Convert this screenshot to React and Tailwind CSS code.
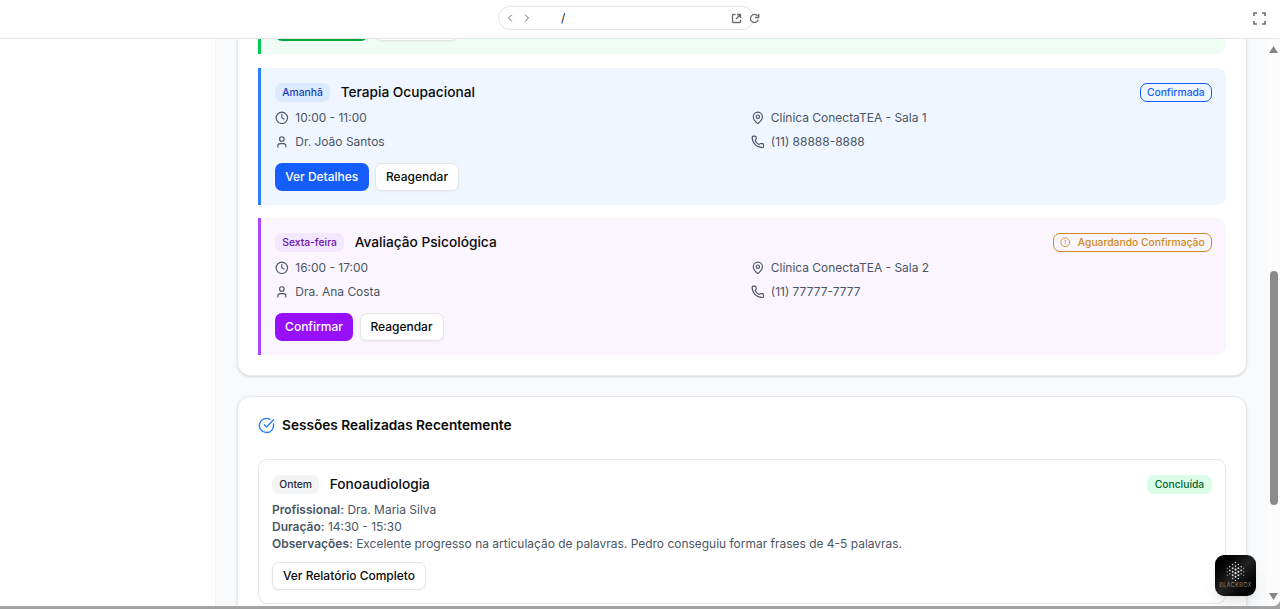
import React from "react";
import { ChevronLeft, ChevronRight, CircleAlert, CircleCheckBig, Clock, MapPin, Phone, User } from "lucide-react";

function Detail({ icon: Icon, children }) {
  return (
    <div className="flex h-[17px] items-center gap-[6.6px]">
      <Icon className="size-[13.7px] shrink-0" strokeWidth={2} />
      <span className="whitespace-nowrap">{children}</span>
    </div>
  );
}

function Badge({ className, children }) {
  return (
    <span className={"inline-flex h-[19px] items-center whitespace-nowrap rounded-[7px] border px-[6.3px] text-[10.3px] font-medium " + className}>
      {children}
    </span>
  );
}

function Button({ className, children }) {
  return (
    <button className={"flex h-[28px] items-center justify-center whitespace-nowrap rounded-[7px] text-[12px] font-medium " + className}>
      {children}
    </button>
  );
}

function Session({ tone, dayTone, day, title, status, time, person, place, phone, action, actionTone }) {
  return (
    <section className={"h-[136.5px] rounded-r-[9px] border-l-[3px] pr-[13.5px] pl-[14px] pt-[14px] " + tone}>
      <div className="flex h-[20.5px] items-center justify-between">
        <div className="flex items-center gap-[10.5px]">
          <Badge className={"border-transparent " + dayTone}>{day}</Badge>
          <h3 className="text-[13.7px] font-medium text-neutral-950">{title}</h3>
        </div>
        {status}
      </div>
      <div className="mt-[6.5px] grid grid-cols-2 gap-x-[14px] gap-y-[7px] text-[11.97px] text-gray-600">
        <Detail icon={Clock}>{time}</Detail>
        <Detail icon={MapPin}>{place}</Detail>
        <Detail icon={User}>{person}</Detail>
        <Detail icon={Phone}>{phone}</Detail>
      </div>
      <div className="mt-[13px] flex gap-[6.5px]">
        <Button className={"text-white " + actionTone}>{action}</Button>
        <Button className="w-[84px] border border-neutral-200 bg-white text-neutral-950 shadow-xs">Reagendar</Button>
      </div>
    </section>
  );
}

const dots = [
  [12, 1, 1], [8, 4, 1], [16, 4, 1], [4, 7, 1], [12, 6, 1.2], [20, 7, 1],
  [0.5, 9, 0.7], [8, 9, 1.3], [16, 9, 1.3], [23.5, 9, 0.7],
  [4, 12, 1.2], [12, 11, 1.6], [20, 12, 1.2], [0.5, 14, 0.8], [8, 14, 1.4], [16, 14, 1.4], [23.5, 14, 0.8],
  [4, 17, 1], [12, 16, 1.6], [20, 17, 1], [0.5, 19, 0.7], [8, 19, 1.3], [16, 19, 1.3], [23.5, 19, 0.7],
  [12, 21, 1.3], [8, 23.5, 0.9], [16, 23.5, 0.9], [12, 26, 0.9],
];

function BlackboxMark() {
  return (
    <div className="absolute right-[24px] bottom-[13px] flex size-[41px] flex-col items-center rounded-[9px] bg-linear-to-br from-black via-[#222222] to-black pt-[5.5px] shadow-lg">
      <svg className="h-[20px] w-[19px]" viewBox="-1 -1 26 28" fill="#e5e5e5">
        {dots.map(([x, y, r], i) => <circle key={i} cx={x} cy={y} r={r} />)}
      </svg>
      <span className="mt-px text-[5.6px] font-light leading-[7px] tracking-[0.4px] text-neutral-400">BLACKBOX</span>
    </div>
  );
}

export default function App() {
  return (
    <div className="relative flex h-[609px] w-[1280px] flex-col overflow-hidden bg-[#a3a3a3] font-['Inter',sans-serif]">
      <header className="grid h-[39px] shrink-0 grid-cols-[1fr_256px_1fr] items-center border-b border-[#e2e4e6] bg-white text-[#6b6b6b]">
        <span />
        <div className="-ml-[14px] flex h-[24px] w-[256px] -translate-y-px items-center rounded-full border border-neutral-200 pl-[5px]">
          <ChevronLeft className="size-[12px]" />
          <ChevronRight className="ml-[5px] size-[12px]" />
          <span className="ml-[28px] text-[12px] text-neutral-800">/</span>
          <svg className="ml-auto size-[11px] shrink-0" viewBox="0 0 11 11" fill="none" stroke="currentColor" strokeWidth="1.3">
            <path d="M4.5 1.5H2.2Q1.5 1.5 1.5 2.2V8.8Q1.5 9.5 2.2 9.5H8.8Q9.5 9.5 9.5 8.8V6.5M6 1.5H9.5V5M9.2 1.8L5 6" />
          </svg>
          <svg className="-mr-[6.5px] ml-[6.5px] size-[11px] shrink-0" viewBox="0 0 11 11" fill="none" stroke="currentColor" strokeWidth="1.3">
            <path d="M8.7 3.1A4 4 0 1 0 9.3 6.6M9.7 1V4.5H6" />
          </svg>
        </div>
        <svg className="mr-[14px] size-[13px] -translate-y-px justify-self-end" viewBox="0 0 13 13" fill="none" stroke="currentColor" strokeWidth="1.6">
          <path d="M1 4V1H4M9 1H12V4M12 9V12H9M4 12H1V9" />
        </svg>
      </header>
      <div className="flex h-[567px] shrink-0 overflow-hidden rounded-br-[7px] bg-gray-50">
        <aside className="w-[216px] shrink-0 border-r border-gray-100 bg-white" />
        <main className="flex min-w-0 flex-1 flex-col gap-[20px] pr-[20.5px] pl-[21px]">
          <section className="h-[337px] shrink-0 rounded-b-[13px] border-x border-b border-gray-200 bg-white px-[20px] shadow-sm">
            <div className="flex h-[15px] gap-[7px] overflow-hidden rounded-br-[9px] border-l-[3px] border-green-500 bg-green-50 pl-[14px]">
              <div className="-mt-[6px] h-[8px] w-[93px] rounded-b-[7px] bg-green-600" />
              <div className="-mt-[6px] h-[8px] w-[83px] rounded-b-[7px] border border-neutral-200 bg-white shadow-xs" />
            </div>
            <div className="mt-[14px] flex flex-col gap-[13.5px]">
              <Session
                tone="border-blue-500 bg-blue-50"
                dayTone="bg-blue-100 text-blue-800"
                day="Amanhã"
                title="Terapia Ocupacional"
                status={<Badge className="border-blue-600 text-blue-600">Confirmada</Badge>}
                time="10:00 - 11:00"
                person="Dr. João Santos"
                place="Clínica ConectaTEA - Sala 1"
                phone="(11) 88888-8888"
                action="Ver Detalhes"
                actionTone="w-[93.5px] bg-blue-600"
              />
              <Session
                tone="border-purple-500 bg-purple-50"
                dayTone="bg-purple-100 text-purple-800"
                day="Sexta-feira"
                title="Avaliação Psicológica"
                status={
                  <Badge className="border-[#d08a20] text-[#d08a20]">
                    <CircleAlert className="mr-[7px] size-[10.5px]" />
                    Aguardando Confirmação
                  </Badge>
                }
                time="16:00 - 17:00"
                person="Dra. Ana Costa"
                place="Clínica ConectaTEA - Sala 2"
                phone="(11) 77777-7777"
                action="Confirmar"
                actionTone="w-[78px] bg-purple-600"
              />
            </div>
          </section>
          <section className="h-[240px] shrink-0 rounded-t-[13px] border border-gray-200 bg-white px-[20px] pt-[18px] shadow-sm">
            <div className="flex h-[20px] items-center gap-[7px]">
              <CircleCheckBig className="size-[17px] text-blue-500" />
              <h2 className="text-[13.66px] font-semibold text-neutral-950">Sessões Realizadas Recentemente</h2>
            </div>
            <article className="mt-[24px] h-[144.5px] rounded-[9px] border border-gray-200 px-[13px] pt-[14px]">
              <div className="flex h-[20.5px] items-center justify-between">
                <div className="flex items-center gap-[10.5px]">
                  <Badge className="border-transparent bg-gray-100 text-gray-800">Ontem</Badge>
                  <h3 className="text-[13.7px] font-medium text-neutral-950">Fonoaudiologia</h3>
                </div>
                <Badge className="border-transparent bg-green-100 text-green-800">Concluída</Badge>
              </div>
              <div className="mt-[6.5px] text-[11.97px] leading-[17.1px] text-gray-600">
                <p><strong className="font-semibold">Profissional:</strong> Dra. Maria Silva</p>
                <p><strong className="font-semibold">Duração:</strong> 14:30 - 15:30</p>
                <p><strong className="font-semibold">Observações:</strong> Excelente progresso na articulação de palavras. Pedro conseguiu formar frases de 4-5 palavras.</p>
              </div>
              <Button className="mt-[10px] w-[154px] border border-neutral-200 bg-white text-neutral-950 shadow-xs">Ver Relatório Completo</Button>
            </article>
          </section>
        </main>
        <div className="flex w-[13px] shrink-0 flex-col items-center bg-[#fcfcfc] pt-[7px] pb-[6px]">
          <svg className="h-[7px] w-[9px]" viewBox="0 0 9 7" fill="#858585"><path d="M4.5 0L9 7H0Z" /></svg>
          <div className="mt-[218px] h-[234px] w-[8px] rounded-full bg-[#8b8b8b]" />
          <svg className="mt-auto h-[7px] w-[9px]" viewBox="0 0 9 7" fill="#858585"><path d="M0 0H9L4.5 7Z" /></svg>
        </div>
      </div>
      <BlackboxMark />
    </div>
  );
}
